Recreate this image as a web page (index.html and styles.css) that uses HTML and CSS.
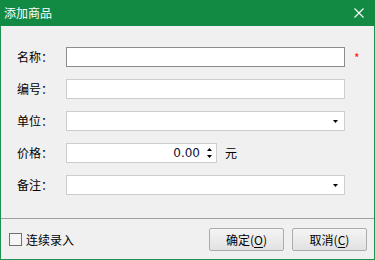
FILE: index.html
```html
<!DOCTYPE html>
<html>
<head>
<meta charset="utf-8">
<link rel="stylesheet" href="styles.css">
</head>
<body>
<div class="window">
  <div class="titlebar">
    <span class="title">添加商品</span>
    <svg class="close" width="10" height="10" viewBox="0 0 10 10"><path d="M0.5 0.5 L9.5 9.5 M9.5 0.5 L0.5 9.5" stroke="#fff" stroke-width="1.1" fill="none"/></svg>
  </div>
  <div class="client">
    <div class="form">
      <div class="row">
        <span class="label">名称：</span>
        <div class="input focused"></div>
        <span class="req">*</span>
      </div>
      <div class="row">
        <span class="label">编号：</span>
        <div class="input"></div>
      </div>
      <div class="row">
        <span class="label">单位：</span>
        <div class="input select">
          <svg class="arrow" width="5" height="3" viewBox="0 0 5 3"><path d="M0 0 H5 L2.5 3 Z" fill="#000"/></svg>
        </div>
      </div>
      <div class="row">
        <span class="label">价格：</span>
        <div class="input number">
          <span class="value">0.00</span>
          <svg class="spin" width="5" height="10" viewBox="0 0 5 10"><path d="M2.5 0 L5 3 H0 Z M0 7 H5 L2.5 10 Z" fill="#000"/></svg>
        </div>
        <span class="unit">元</span>
      </div>
      <div class="row">
        <span class="label">备注：</span>
        <div class="input select">
          <svg class="arrow" width="5" height="3" viewBox="0 0 5 3"><path d="M0 0 H5 L2.5 3 Z" fill="#000"/></svg>
        </div>
      </div>
    </div>
    <div class="footer">
      <label class="check"><span class="box"></span><span>连续录入</span></label>
      <div class="buttons">
        <button class="btn">确定(<u>O</u>)</button>
        <button class="btn">取消(<u>C</u>)</button>
      </div>
    </div>
  </div>
</div>
</body>
</html>
```
FILE: styles.css
```css
* { box-sizing: border-box; }
html, body { margin: 0; padding: 0; }
body {
  width: 375px;
  height: 260px;
  overflow: hidden;
  font-family: "Noto Sans CJK SC", "Noto Sans", sans-serif;
  font-size: 12px;
  color: #000;
}
.window {
  width: 375px;
  height: 260px;
  display: flex;
  flex-direction: column;
}
.titlebar {
  height: 26px;
  background: #128a43;
  display: flex;
  align-items: center;
  justify-content: space-between;
  padding: 0 11px 0 4px;
  color: #fff;
}
.title { font-size: 12px; line-height: 26px; }
.close { display: block; margin-top: 0; }
.client {
  flex: 1;
  background: #f0f0f0;
  border: 1px solid #1f9150;
  border-top: none;
  display: flex;
  flex-direction: column;
}
.form {
  height: 192px;
  padding: 21px 0 0 16px;
  display: flex;
  flex-direction: column;
  gap: 12px;
}
.row {
  height: 20px;
  display: flex;
  align-items: center;
}
.label {
  width: 49px;
  line-height: 20px;
}
.input {
  width: 279px;
  height: 20px;
  background: #fff;
  border: 1px solid #cdcdcd;
  display: flex;
  align-items: center;
  justify-content: flex-end;
}
.input.focused { border-color: #8c8c8c; }
.select { padding-right: 6px; }
.number {
  width: 151px;
  padding-right: 4px;
}
.value {
  font-family: "DejaVu Sans", sans-serif;
  font-size: 12px;
  color: #101030;
  margin-right: 7px;
  line-height: 18px;
}
.spin { display: block; }
.arrow { display: block; }
.unit { margin-left: 8px; line-height: 20px; }
.req {
  color: #ff1010;
  margin-left: 9px;
  align-self: flex-start;
  font-size: 12px;
  line-height: 16px;
  margin-top: 3px;
}
.footer {
  height: 41px;
  border-top: 1px solid #a0a0a0;
  display: flex;
  align-items: center;
  justify-content: space-between;
  padding: 0 7px 0 8px;
}
.check {
  display: flex;
  align-items: center;
  gap: 4px;
}
.box {
  width: 13px;
  height: 13px;
  border: 1px solid #707070;
  background: #f6f6f6;
}
.buttons {
  display: flex;
  gap: 8px;
}
.btn {
  width: 75px;
  height: 23px;
  border: 1px solid #acacac;
  border-radius: 2px;
  background: linear-gradient(#f4f4f4, #e2e2e2);
  font-family: "Noto Sans CJK SC", "Noto Sans", sans-serif;
  font-size: 12px;
  color: #000;
  padding: 0;
  line-height: 21px;
}
.btn u { text-decoration: underline; text-underline-offset: 2px; }
```
